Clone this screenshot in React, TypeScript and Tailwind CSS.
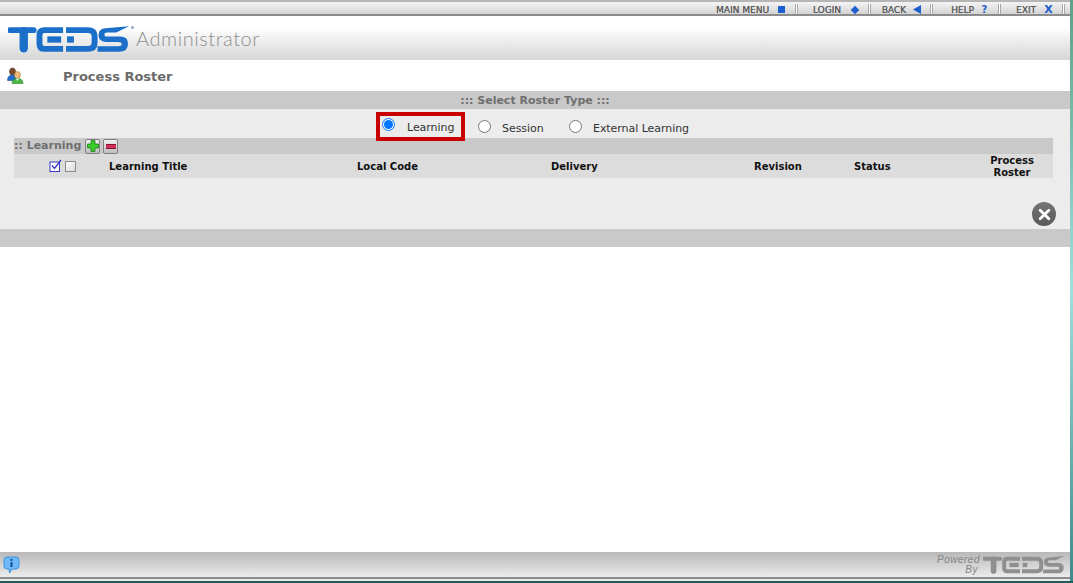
const font = "font-['Verdana','DejaVu_Sans',sans-serif]";

function TedsLogo({ color, className }: { color: string; className: string }) {
  // stylised wordmark, drawn as thick bars
  return (
    <svg viewBox="0 0 124 27" className={className} role="img" aria-label="TEDS">
      <g fill="none" stroke={color} strokeWidth="6">
        <path d="M2 4H26" strokeLinecap="round" />
        <path d="M16 5V22.5" strokeWidth="8.5" strokeLinecap="round" />
        <path d="M56 4H37Q32 4 32 9V18Q32 23 37 23H56" />
        <path d="M40 13.5H54" strokeWidth="6.4" />
        <path d="M59 4H81Q88 4 88 10V17Q88 23 81 23H59" />
        <path d="M60 13.5H67" strokeWidth="6.4" />
      </g>
      <path d="M92 9Q92 2.5 99 2L123 0L110 6.5H101Q98 6.5 98 8.6Q98 10.5 101 10.5H114Q122 10.5 122 17.5Q122 26 113 26H91V20.3H112Q115.5 20.3 115.5 18Q115.5 16 112 16H100Q92 16 92 9Z" fill={color} />
    </svg>
  );
}

function MenuItem({ label, icon, width, gap }: { label: string; icon: React.ReactNode; width: string; gap: string }) {
  return (
    <div className={`flex items-center justify-end ${width}`}>
      <span className="mt-[4px] text-[9px] leading-none text-[#555] [text-shadow:0.3px_0_0_#777,0_0_2px_#fff]">
        {label}
      </span>
      <span className={`mt-[3px] flex h-3 w-[9px] items-center justify-center ${gap}`}>{icon}</span>
      <span className="ml-[9px] mt-[3px] h-[11px] w-[3px] border-x border-x-[#a8a8a8] bg-white" />
    </div>
  );
}

function Radio({ label, labelWidth, gap }: { label: string; labelWidth: string; gap: string }) {
  return (
    <label className={`flex items-start ${gap}`}>
      <span className="mt-[11px] h-[13px] w-[13px] rounded-full border border-[#767676] bg-white" />
      <span className={`mt-[14px] text-[11px] leading-none tracking-[-0.05px] text-[#333] ${labelWidth}`}>{label}</span>
    </label>
  );
}

export default function App() {
  return (
    <div className={`flex h-[583px] w-[1073px] flex-col overflow-hidden bg-[#1f5c5c] ${font}`}>
      <div className="flex h-[581px] w-full bg-gradient-to-b from-[#5f9f86] via-[#9fe0de] to-[#3f8a8a]">
        <div className="flex h-full w-[1070px] flex-col bg-white">
          {/* barra superior */}
          <div className="h-[2px] bg-[#b5b5b5]" />
          <div className="flex h-[12px] items-center justify-end bg-gradient-to-b from-[#f4f4f4] to-[#d4d4d4] pr-[5px]">
            <MenuItem width="w-[90px]" gap="ml-[8px]" label="MAIN MENU" icon={<span className="h-[7px] w-[7px] bg-[#1e5fd0]" />} />
            <MenuItem width="w-[73px]" gap="ml-[9px]" label="LOGIN" icon={<span className="h-[6px] w-[6px] rotate-45 bg-[#1e5fd0]" />} />
            <MenuItem
              width="w-[62px]"
              gap="ml-[6px]"
              label="BACK"
              icon={
                <svg viewBox="0 0 8 9" className="h-[9px] w-[8px]">
                  <path d="M0 4.5L8 0V9Z" fill="#1e5fd0" />
                </svg>
              }
            />
            <MenuItem
              width="w-[68px]"
              gap="ml-[6px]"
              label="HELP"
              icon={<span className="text-[10px] font-bold leading-none text-[#1e5fd0]">?</span>}
            />
            <MenuItem
              width="w-[64px]"
              gap="ml-[8px]"
              label="EXIT"
              icon={<span className="text-[11px] font-bold leading-none text-[#1e5fd0]">X</span>}
            />
          </div>
          <div className="h-[2px] bg-[#8c8c8c]" />

          {/* cabecalho com logo */}
          <div className="flex h-[44px] items-center bg-gradient-to-b from-white from-[25%] to-[#d6d6d6] pl-[8px]">
            <div className="mt-[2px] flex items-start">
              <TedsLogo color="#1b6fc9" className="h-[27px] w-[122px]" />
              <span className="ml-[1px] h-[3px] w-[3px] rounded-full bg-[#8fa6bd]" />
            </div>
            <span className="mb-[1px] ml-[2px] font-['Lato','Open_Sans',sans-serif] text-[20px] font-light leading-none tracking-[0.55px] text-[#8f8f8f]">
              Administrator
            </span>
          </div>

          {/* titulo da pagina */}
          <div className="flex h-[31px] items-center bg-white pl-[7px]">
            <svg viewBox="0 0 17 17" className="-mt-[1px] h-[17px] w-[17px]">
              <ellipse cx="5.5" cy="4.5" rx="3" ry="3.6" fill="#7a4a2a" stroke="#4a2c18" strokeWidth="0.5" />
              <path d="M0.5 13.5Q0.5 8 5.5 8Q10 8 10 13.5Z" fill="#1f6fd0" stroke="#123f80" strokeWidth="0.5" />
              <ellipse cx="10.5" cy="8" rx="3" ry="3.6" fill="#efb878" stroke="#a87038" strokeWidth="0.5" />
              <path d="M5 16.5Q5 11.5 10.5 11.5Q16 11.5 16 16.5Z" fill="#4ab83f" stroke="#1f6f1f" strokeWidth="0.5" />
              <path d="M9 11.5L10.5 14L12 11.5Z" fill="#fff" />
            </svg>
            <span className="ml-[39px] mt-[2px] text-[13px] font-bold leading-none text-[#6b6b6b]">Process Roster</span>
          </div>

          {/* selecao do tipo de roster */}
          <div className="flex h-[18px] items-center justify-center bg-[#c9c9c9] pt-[2px] text-[11px] font-bold text-[#6f6f6f]">
            ::: Select Roster Type :::
          </div>
          <div className="flex flex-col bg-[#ececec] pl-[14px] pr-[17px]">
            <div className="flex h-[29px] items-start justify-center pr-[1px]">
              {/* destaque vermelho por cima da barra seguinte */}
              <div className="relative z-10 mt-[3px] flex h-[29px] w-[89px] items-start border-[4px] border-[#c80000] pl-[2px]">
                <span className="mt-[2px] flex h-[13px] w-[13px] items-center justify-center rounded-full border border-[#0075ff] bg-white">
                  <span className="h-[9px] w-[9px] rounded-full bg-[#0075ff]" />
                </span>
                <span className="ml-[12px] mt-[6px] text-[11px] leading-none tracking-[-0.05px] text-[#333]">Learning</span>
              </div>
              <div className="ml-[13px]">
                <Radio label="Session" labelWidth="w-[43px]" gap="gap-[11px]" />
              </div>
              <div className="ml-[24px]">
                <Radio label="External Learning" labelWidth="w-[97px]" gap="gap-[11px]" />
              </div>
            </div>

            <div className="flex h-[16px] items-center bg-[#c9c9c9]">
              <span className="-mt-[2px] text-[11px] font-bold leading-none text-[#6f6f6f]">:: Learning</span>
              <span className="ml-[4px] flex h-[15px] w-[15px] items-center justify-center rounded-[2px] border border-[#808080] bg-gradient-to-b from-[#f0f0f0] to-[#bdbdbd]">
                <svg viewBox="0 0 11 11" className="h-[12px] w-[12px]">
                  <path d="M3.7 0.5H7.3V3.7H10.5V7.3H7.3V10.5H3.7V7.3H0.5V3.7H3.7Z" fill="#3ccc2c" stroke="#0f7a0f" strokeWidth="0.7" />
                </svg>
              </span>
              <span className="ml-[3px] flex h-[15px] w-[15px] items-center justify-center rounded-[2px] border border-[#808080] bg-gradient-to-b from-[#f0f0f0] to-[#bdbdbd]">
                <span className="h-[5px] w-[10px] border-y border-y-[#8a1030] bg-[#d0305a]" />
              </span>
            </div>

            <div className="flex h-[24px] items-center bg-[#dcdcdc] pt-[2px] text-[10px] font-bold leading-[12px] text-[#111]">
              <div className="-mt-[4px] flex w-[95px] justify-end gap-[3px] pr-[33px]">
                <svg viewBox="0 0 13 13" className="h-[13px] w-[13px]">
                  <rect x="1" y="3" width="9.5" height="9.5" fill="#fff" stroke="#3a3ac8" />
                  <path d="M3 6.5L5.5 9.5L12 1" fill="none" stroke="#3a3ac8" strokeWidth="1.4" />
                </svg>
                <span className="mt-[2px] h-[11px] w-[11px] border border-[#8c8c8c] bg-gradient-to-br from-white to-[#d8d8d8]" />
              </div>
              <span className="w-[248px]">Learning Title</span>
              <span className="w-[194px]">Local Code</span>
              <span className="w-[203px]">Delivery</span>
              <span className="w-[100px]">Revision</span>
              <span className="w-[120px]">Status</span>
              <span className="w-[76px] text-center">
                Process
                <br />
                Roster
              </span>
            </div>

            <div className="flex h-[51px] items-end justify-end pb-[3px]">
              <span className="-mr-[3px] flex h-[24px] w-[24px] items-center justify-center rounded-full bg-gradient-to-b from-[#757575] to-[#5a5a5a]">
                <svg viewBox="0 0 12 12" className="h-[13px] w-[13px]">
                  <path d="M2 2L10 10M10 2L2 10" stroke="#fff" strokeWidth="2.6" strokeLinecap="round" />
                </svg>
              </span>
            </div>
          </div>
          <div className="h-[18px] bg-[#c9c9c9]" />

          <div className="flex-1 bg-white" />

          {/* rodape */}
          <div className="flex h-[25px] items-center justify-between bg-gradient-to-b from-[#b8b8b8] to-[#ececec] pl-[3px] pr-[5px]">
            <svg viewBox="0 0 17 18" className="h-[18px] w-[17px]">
              <path d="M4 1H13Q16 1 16 4V10Q16 13 13 13H9L6.5 17L6 13H4Q1 13 1 10V4Q1 1 4 1Z" fill="#6cb8f8" stroke="#3d94e0" />
              <rect x="7.5" y="3" width="2" height="2" fill="#0f4f9a" />
              <rect x="7.5" y="6" width="2" height="5" fill="#0f4f9a" />
            </svg>
            <div className="flex items-center">
              <span className="mr-[5px] w-[41px] text-right font-['Liberation_Sans',sans-serif] text-[10px] italic leading-[10px] tracking-[0.5px] text-[#858585]">
                Powered
                <br />
                By
              </span>
              <TedsLogo color="#8f8f8f" className="h-[18px] w-[82px]" />
            </div>
          </div>
          <div className="h-[2px] bg-[#8c8c8c]" />
          <div className="h-[2px] bg-[#e8e8e8]" />
        </div>
      </div>
    </div>
  );
}
